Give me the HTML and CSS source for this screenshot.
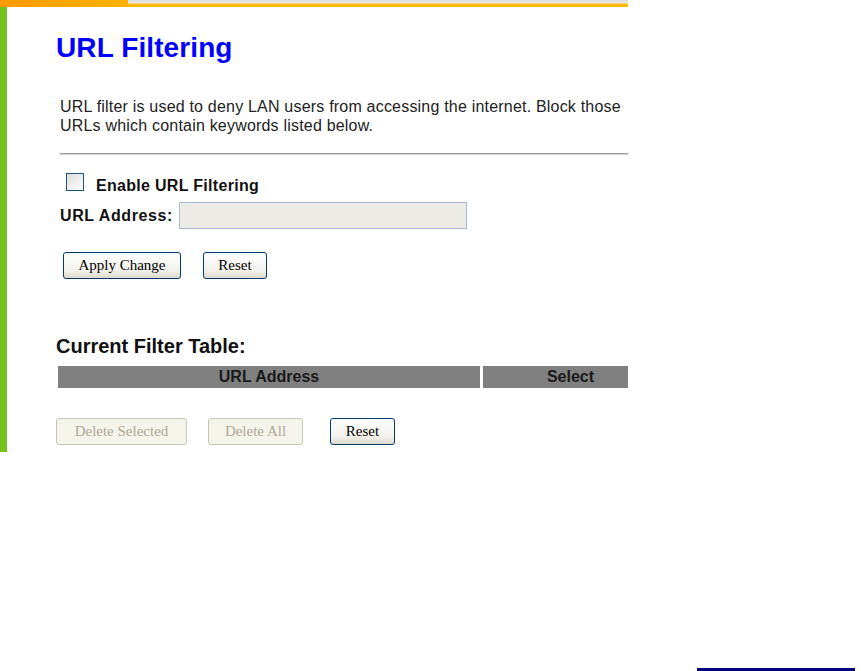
FILE: index.html
```html
<!DOCTYPE html>
<html lang="en">
<head>
  <meta charset="UTF-8">
  <title>URL Filtering</title>
  <link rel="stylesheet" href="styles.css">
</head>
<body>

  <div class="topbar">
    <div class="topbar-tab"></div>
    <div class="topbar-line"></div>
  </div>

  <div class="frame">
    <div class="side"></div>
    <div class="content">
      <h1>URL Filtering</h1>
      <p class="intro">URL filter is used to deny LAN users from accessing the internet. Block those URLs which contain keywords listed below.</p>
      <div class="rule"></div>

      <form>
        <div class="check-row">
          <span class="checkbox"></span>
          <span class="check-label">Enable URL Filtering</span>
        </div>
        <div class="field-row">
          <span class="field-label">URL Address:</span>
          <span class="field-input"></span>
        </div>
        <div class="btn-row">
          <button type="button" class="btn btn-apply">Apply Change</button>
          <button type="button" class="btn btn-reset">Reset</button>
        </div>
      </form>

      <h2>Current Filter Table:</h2>
      <table class="filter-table">
        <tr>
          <th class="col-url">URL Address</th>
          <th class="col-select">Select</th>
        </tr>
      </table>

      <div class="btn-row btn-row-table">
        <button type="button" class="btn btn-del-sel" disabled>Delete Selected</button>
        <button type="button" class="btn btn-del-all" disabled>Delete All</button>
        <button type="button" class="btn btn-reset2">Reset</button>
      </div>
    </div>
  </div>

  <div class="foot-line"></div>

</body>
</html>
```

FILE: styles.css
```css
body {
  margin: 0;
  background: #ffffff;
  font-family: "Liberation Sans", Arial, sans-serif;
  color: #222;
}

.topbar {
  display: flex;
  height: 7px;
  width: 628px;
}

.topbar-tab {
  width: 128px;
  background: linear-gradient(to right, #ff9a00, #ffb300);
}

.topbar-line {
  flex: 1;
  background: linear-gradient(to bottom, #d8d8d8 0, #ececec 3px, #ffb800 4px, #ffb800 7px);
}

.frame {
  display: flex;
  width: 628px;
  overflow: hidden;
}

.side {
  flex: none;
  width: 7px;
  background: #76c01e;
}

.content {
  flex: none;
  width: 572px;
  padding: 0 0 7px 49px;
}

h1 {
  margin: 25px 0 0 0;
  font-size: 28px;
  line-height: 32px;
  font-weight: bold;
  color: #0000ff;
  letter-spacing: 0.1px;
}

.intro {
  margin: 33px 0 0 4px;
  font-size: 16px;
  line-height: 19px;
  letter-spacing: 0.2px;
  color: #222;
}

.rule {
  margin: 18px 0 0 4px;
  border-top: 1px solid #9a9a9a;
  border-bottom: 1px solid #d4d4d4;
}

form {
  margin: 0;
}

.check-row {
  display: flex;
  height: 22px;
  margin-top: 18px;
  font-size: 16px;
  font-weight: bold;
}

.checkbox {
  width: 16px;
  height: 16px;
  margin-left: 10px;
  border: 1px solid #1c5180;
  background: linear-gradient(135deg, #dcdcd7, #ffffff);
}

.check-label {
  margin: 4px 0 0 12px;
  line-height: 18px;
  letter-spacing: 0.3px;
  color: #111;
}

.field-row {
  display: flex;
  margin-top: 7px;
  height: 27px;
}

.field-label {
  width: 119px;
  margin-left: 4px;
  font-size: 16px;
  font-weight: bold;
  line-height: 27px;
  letter-spacing: 0.6px;
  color: #111;
}

.field-input {
  width: 288px;
  height: 27px;
  box-sizing: border-box;
  border: 1px solid #a4b9d2;
  background: #ecebe5;
}

.btn-row {
  display: flex;
  margin-top: 23px;
  padding-left: 7px;
  gap: 22px;
}

.btn {
  height: 27px;
  padding: 0;
  box-sizing: border-box;
  border: 1px solid #003c74;
  border-radius: 3px;
  background: linear-gradient(to bottom, #ffffff, #f2f1eb 70%, #dcd9cc);
  font-family: "Liberation Serif", "Times New Roman", serif;
  font-size: 15px;
  color: #000;
}

.btn:disabled {
  border-color: #c9c7ba;
  background: #f5f4ea;
  color: #aca899;
}

.btn-apply { width: 118px; }
.btn-reset { width: 64px; }

h2 {
  margin: 55px 0 0 0;
  font-size: 20px;
  line-height: 24px;
  font-weight: bold;
  color: #111;
}

.filter-table {
  margin: 8px 0 0 2px;
  width: 600px;
  border-collapse: collapse;
}

.filter-table th {
  height: 22px;
  padding: 0;
  background: #808080;
  font-size: 16px;
  font-weight: bold;
  color: #1a1a1a;
  text-align: center;
}

.col-url {
  width: 422px;
  border-right: 3px solid #ffffff;
}

.col-select {
  width: 175px;
}

.btn-row-table {
  margin-top: 30px;
  padding-left: 0;
  gap: 21px;
}

.btn-del-sel { width: 131px; }
.btn-del-all { width: 95px; margin-right: 6px; }
.btn-reset2 { width: 65px; }

.foot-line {
  margin: 216px 0 0 697px;
  width: 158px;
  height: 3px;
  background: #000080;
}
```
